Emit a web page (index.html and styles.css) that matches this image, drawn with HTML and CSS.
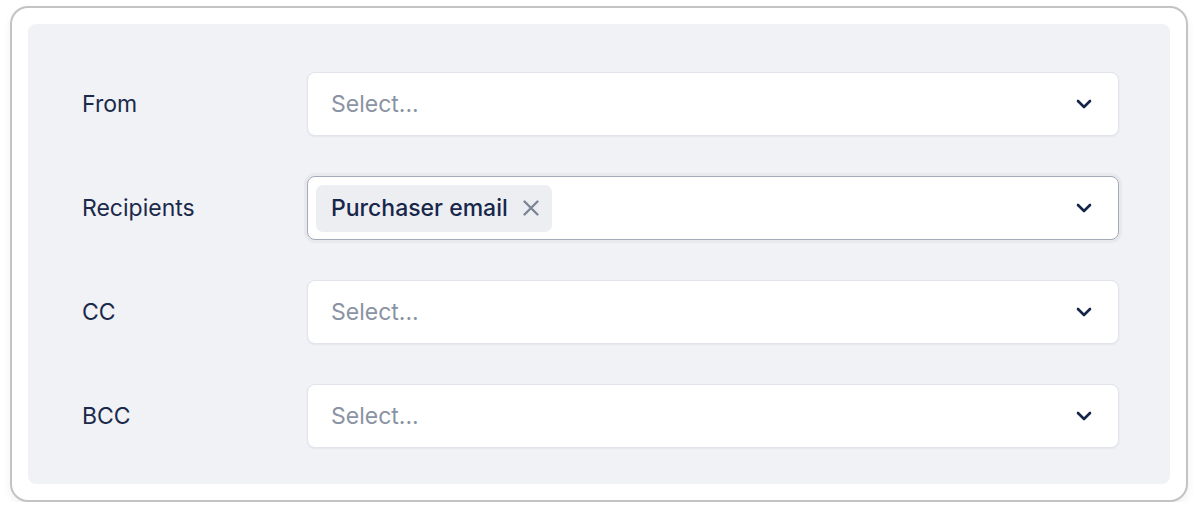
FILE: index.html
```html
<!DOCTYPE html>
<html>
<head>
<meta charset="utf-8">
<link rel="stylesheet" href="styles.css">
</head>
<body>
<div class="card">
  <div class="panel">
    <div class="row">
      <div class="label">From</div>
      <div class="select">
        <span class="placeholder">Select...</span>
        <svg class="chev" width="16" height="10" viewBox="0 0 16 10"><path d="M2 2 L8 8 L14 2" fill="none" stroke="#14244a" stroke-width="2.6" stroke-linecap="round" stroke-linejoin="round"/></svg>
      </div>
    </div>
    <div class="row">
      <div class="label">Recipients</div>
      <div class="select focused">
        <span class="chip">Purchaser email
          <svg class="x" width="18" height="18" viewBox="0 0 18 18"><path d="M2.5 2.5 L15.5 15.5 M15.5 2.5 L2.5 15.5" stroke="#7d8594" stroke-width="2.4" stroke-linecap="round"/></svg>
        </span>
        <svg class="chev" width="16" height="10" viewBox="0 0 16 10"><path d="M2 2 L8 8 L14 2" fill="none" stroke="#14244a" stroke-width="2.6" stroke-linecap="round" stroke-linejoin="round"/></svg>
      </div>
    </div>
    <div class="row">
      <div class="label">CC</div>
      <div class="select">
        <span class="placeholder">Select...</span>
        <svg class="chev" width="16" height="10" viewBox="0 0 16 10"><path d="M2 2 L8 8 L14 2" fill="none" stroke="#14244a" stroke-width="2.6" stroke-linecap="round" stroke-linejoin="round"/></svg>
      </div>
    </div>
    <div class="row">
      <div class="label">BCC</div>
      <div class="select">
        <span class="placeholder">Select...</span>
        <svg class="chev" width="16" height="10" viewBox="0 0 16 10"><path d="M2 2 L8 8 L14 2" fill="none" stroke="#14244a" stroke-width="2.6" stroke-linecap="round" stroke-linejoin="round"/></svg>
      </div>
    </div>
  </div>
</div>
</body>
</html>
```
FILE: styles.css
```css
* { box-sizing: border-box; }
html, body { margin: 0; padding: 0; background: #ffffff; }
body {
  font-family: Inter, "Noto Sans", sans-serif;
  padding: 6px 10px 0 10px;
}
.card {
  width: 1178px;
  height: 496px;
  border: 2px solid #c3c3c3;
  border-radius: 18px;
  background: #ffffff;
  padding: 16px;
  box-shadow: 0 4px 10px rgba(0,0,0,0.06);
}
.panel {
  background: #f1f2f6;
  border-radius: 8px;
  height: 100%;
  padding: 48px 51px 36px 54px;
  display: flex;
  flex-direction: column;
  gap: 40px;
}
.row {
  display: flex;
  align-items: center;
  height: 64px;
}
.label {
  width: 225px;
  flex: none;
  font-size: 23px;
  color: #1b2a4a;
}
.select {
  flex: 1;
  height: 64px;
  background: #ffffff;
  border: 1px solid #e1e4ea;
  border-radius: 8px;
  box-shadow: 0 1px 2px rgba(20,30,60,0.06);
  display: flex;
  align-items: center;
  padding: 0 26px 0 23px;
}
.select.focused {
  border: 1.5px solid #a4abb8;
  box-shadow: 0 0 0 3px #e7e9ee;
  padding-left: 8px;
}
.placeholder {
  font-size: 23px;
  color: #8a93a3;
  flex: 1;
}
.chip {
  display: inline-flex;
  align-items: center;
  height: 47px;
  background: #eceef2;
  border-radius: 7px;
  padding: 0 12px 0 15px;
  font-size: 23px;
  font-weight: 500;
  color: #17264a;
  gap: 14px;
}
.chip .x { display: block; }
.focused .chip { margin-right: auto; }
.chev { display: block; flex: none; }
```
